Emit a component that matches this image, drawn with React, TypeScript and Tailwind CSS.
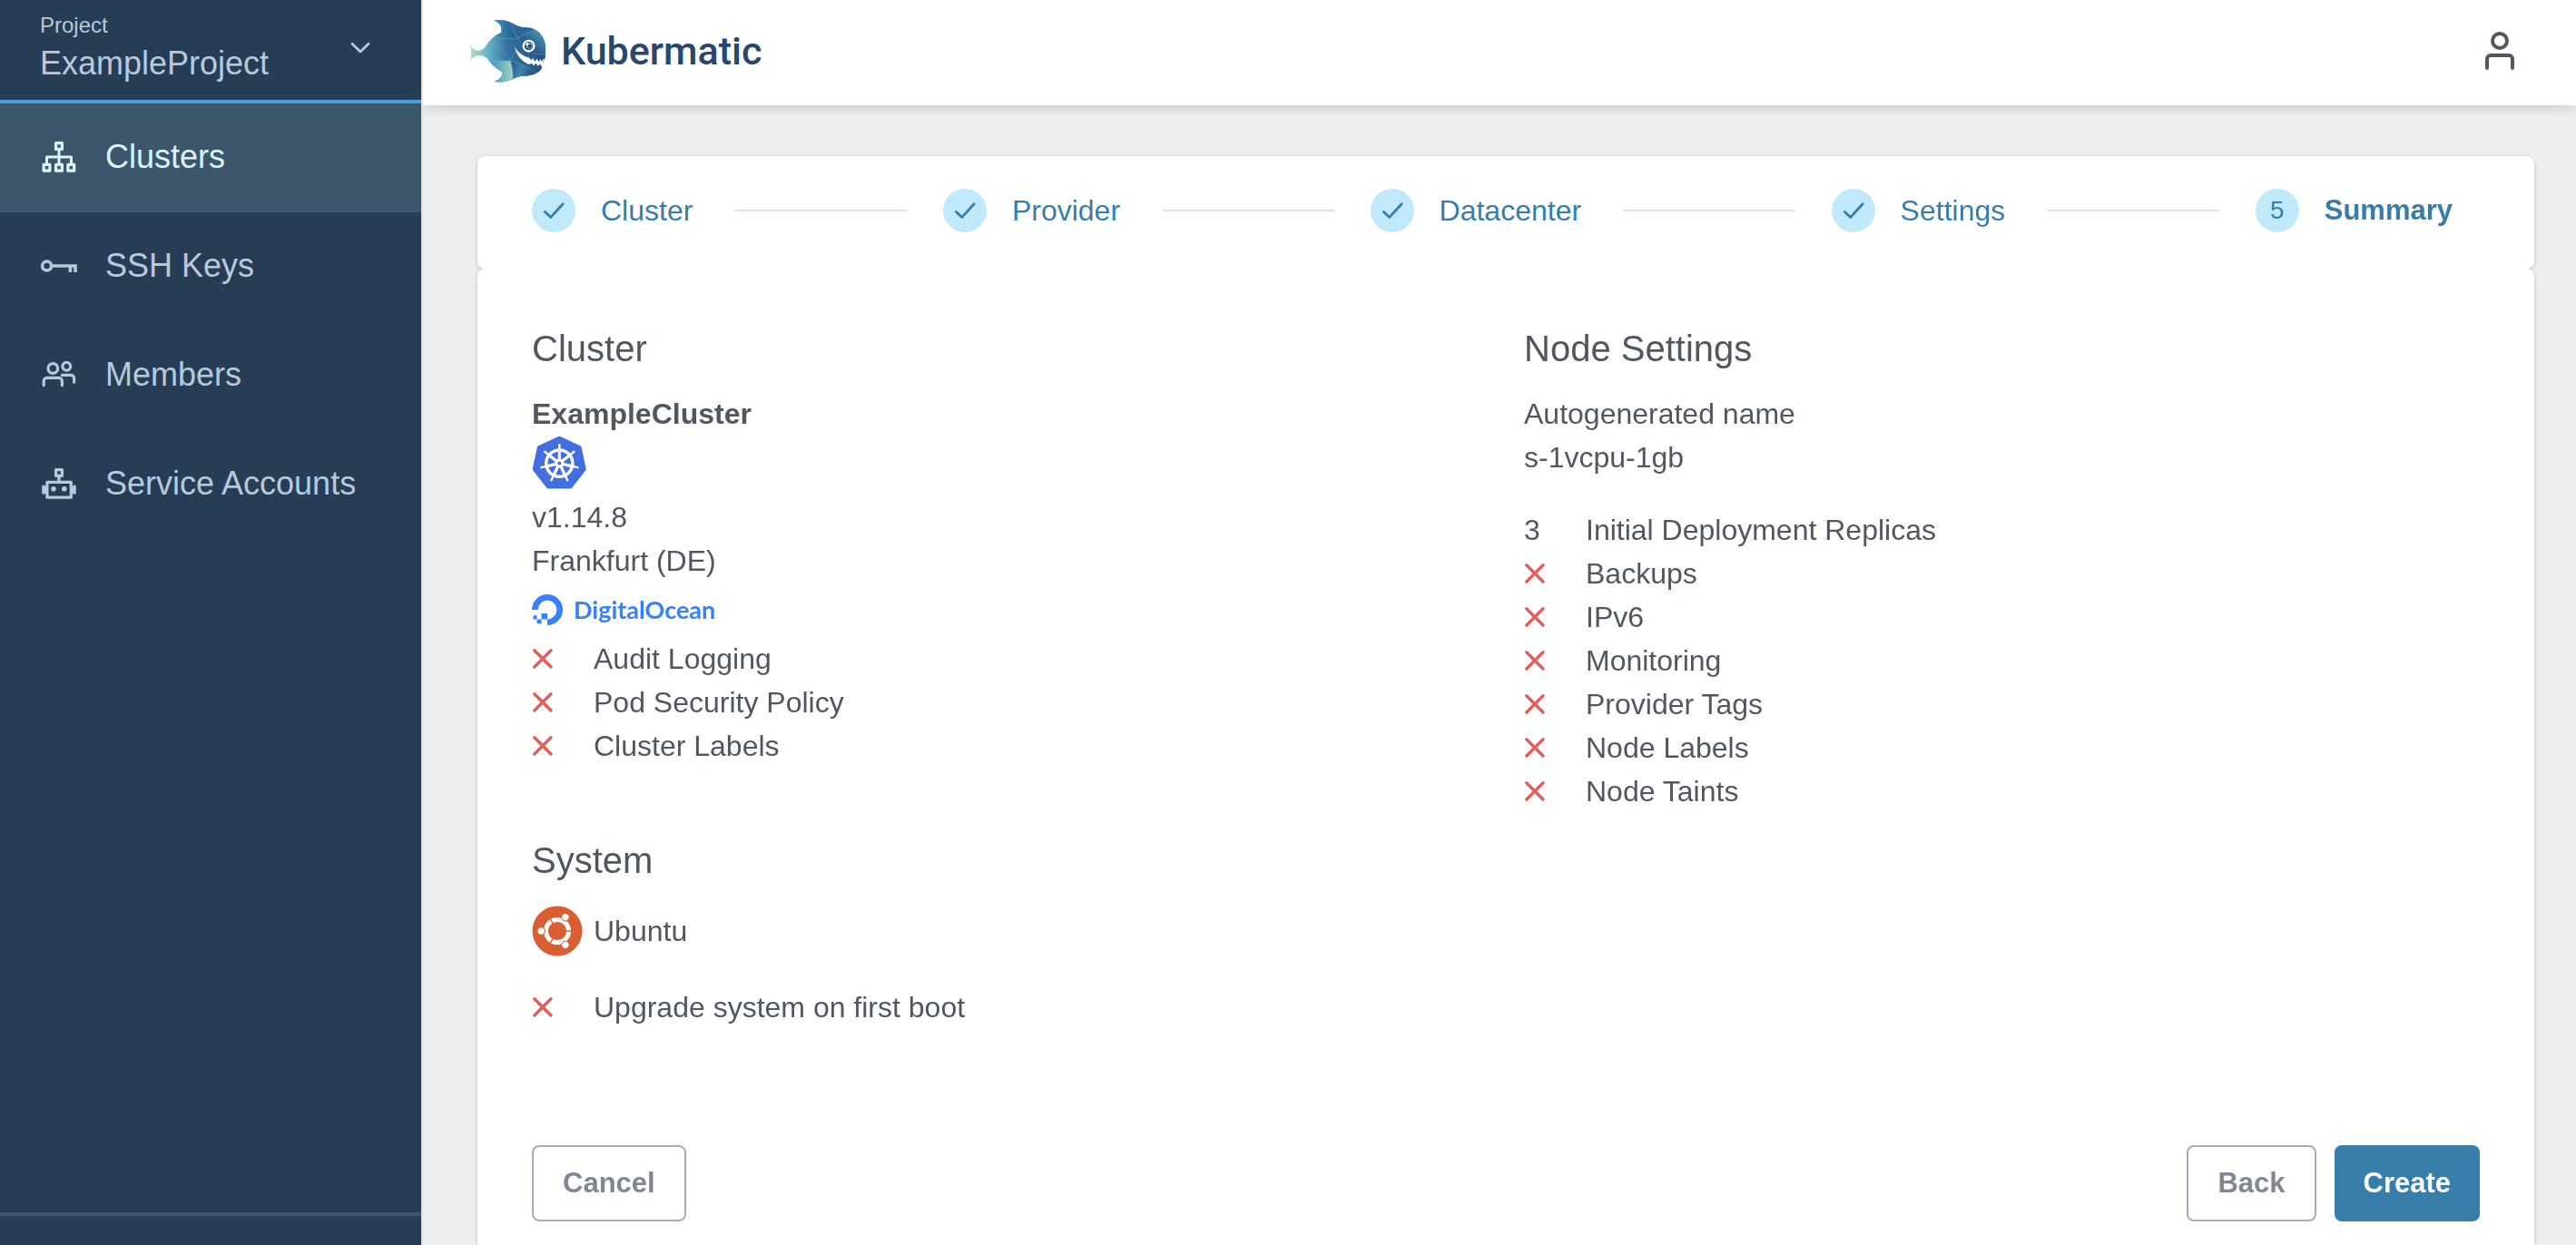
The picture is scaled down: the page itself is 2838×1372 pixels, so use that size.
import React from "react";

type IconProps = { className?: string };

const stroke = {
  fill: "none",
  stroke: "currentColor",
  strokeWidth: 3.2,
  strokeLinecap: "round" as const,
  strokeLinejoin: "round" as const,
};

function ClustersIcon() {
  return (
    <svg viewBox="0 0 40 40" className="size-10 shrink-0" aria-hidden="true" {...stroke}>
      <rect x="17.6" y="4.6" width="6.8" height="6.8" />
      <rect x="4.1" y="28.4" width="6.8" height="6.8" />
      <rect x="17.6" y="28.4" width="6.8" height="6.8" />
      <rect x="30.9" y="28.4" width="6.8" height="6.8" />
      <path d="M21 12v16M7.5 28v-8h27v8" strokeWidth="3" />
    </svg>
  );
}

function KeyIcon() {
  return (
    <svg viewBox="0 0 40 40" className="size-10 shrink-0 overflow-visible" aria-hidden="true" {...stroke} strokeLinecap="butt" strokeLinejoin="miter" strokeWidth="3.5">
      <circle cx="7.6" cy="20" r="5" />
      <path d="M13 20h26V27M33.4 20V27" />
    </svg>
  );
}

function MembersIcon() {
  return (
    <svg viewBox="0 0 40 40" className="size-10 shrink-0" aria-hidden="true" {...stroke}>
      <circle cx="14.3" cy="13" r="5.3" />
      <circle cx="29.3" cy="10.8" r="4.4" />
      <path d="M4.2 31.6V27a3.6 3.6 0 0 1 3.6-3.6h13a3.6 3.6 0 0 1 3.6 3.6v4.6" />
      <path d="M24.4 20.4h9.8a3.4 3.4 0 0 1 3.4 3.4v4.4" />
    </svg>
  );
}

function RobotIcon() {
  return (
    <svg viewBox="0 0 40 40" className="size-10 shrink-0" aria-hidden="true" {...stroke}>
      <rect x="17.6" y="4.6" width="6.8" height="6.8" />
      <path d="M21 12v5" />
      <rect x="7.9" y="18.3" width="26.4" height="16.8" />
      <path d="M4 23.4v6.6M38 23.4v6.6" strokeWidth="3.6" />
      <path d="M6 23.4v6.6M36 23.4v6.6" strokeWidth="2" />
      <circle cx="15" cy="25.8" r="2.8" fill="currentColor" stroke="none" />
      <circle cx="26.8" cy="25.8" r="2.8" fill="currentColor" stroke="none" />
    </svg>
  );
}

function ChevronIcon({ className }: IconProps) {
  return (
    <svg viewBox="0 0 22 14" className={className} aria-hidden="true" {...stroke} strokeWidth="2.8">
      <path d="M2 2.2l9 8.8 9-8.8" />
    </svg>
  );
}

function UserIcon() {
  return (
    <svg viewBox="0 0 32 42" className="h-[42px] w-8" aria-hidden="true" {...stroke} strokeWidth="4">
      <circle cx="16" cy="10" r="8" />
      <path d="M2 40V30a4 4 0 0 1 4-4h20a4 4 0 0 1 4 4v10" />
    </svg>
  );
}

function CheckIcon() {
  return (
    <svg viewBox="0 0 48 48" className="size-12" aria-hidden="true" {...stroke} strokeWidth="2.8">
      <path d="M14.4 25.4l6.4 6 13.4-14.6" />
    </svg>
  );
}

function CrossIcon() {
  return (
    <svg viewBox="0 0 24 24" className="size-6 text-[#df5f5a]" aria-label="disabled" role="img" {...stroke} strokeWidth="3.4">
      <path d="M2.8 2.8l18.2 18.2M21 2.8L2.8 21" />
    </svg>
  );
}

function FishLogo() {
  return (
    <svg viewBox="52 64 254 210" className="h-[70px] w-[85px]" aria-hidden="true">
      <defs>
        <linearGradient id="body" x1="0" x2="1">
          <stop offset="0" stopColor="#b7dccd" />
          <stop offset="0.25" stopColor="#62b3c4" />
          <stop offset="0.5" stopColor="#34719f" />
          <stop offset="1" stopColor="#24507f" />
        </linearGradient>
        <linearGradient id="fin" x1="0" x2="1">
          <stop offset="0" stopColor="#3f95b3" />
          <stop offset="1" stopColor="#24588c" />
        </linearGradient>
        <linearGradient id="belly" x1="0" x2="1">
          <stop offset="0" stopColor="#3b9bb9" />
          <stop offset="1" stopColor="#a6d3c8" />
        </linearGradient>
        <linearGradient id="brow" x1="0" y1="1" x2="1" y2="0">
          <stop offset="0.4" stopColor="#285a8e" />
          <stop offset="1" stopColor="#4fa9c1" />
        </linearGradient>
        <linearGradient id="jaw" x1="0" x2="1" y2="0.3">
          <stop offset="0" stopColor="#24548a" />
          <stop offset="0.5" stopColor="#3c86ac" />
          <stop offset="1" stopColor="#23507f" />
        </linearGradient>
      </defs>
      <path
        d="M54 149Q62 166 80 168Q98 168 110 147Q124 124 158 108Q162 80 133 68Q166 64 190 76Q214 90 232 92Q256 92 272 101Q298 116 303 152V190L290 220L292 226Q284 242 262 248Q242 253 222 253Q206 255 195 263Q170 276 134 271Q160 262 161 240Q128 222 112 196Q100 183 80 184Q64 188 54 202Q62 176 54 149Z"
        fill="url(#body)"
      />
      <path d="M133 68Q166 64 190 76Q190 104 208 128Q168 132 134 120Q144 114 158 108Q162 80 133 68Z" fill="url(#fin)" />
      <path d="M190 76Q214 90 232 92Q256 92 268 99Q238 112 212 126Q196 106 190 76Z" fill="#2b6698" />
      <path d="M268 99Q298 114 303 152V182Q252 178 212 128Q238 112 268 99Z" fill="url(#brow)" />
      <path d="M128 208Q160 200 188 203Q198 230 195 263Q170 276 134 271Q160 262 161 240Q140 228 128 208Z" fill="url(#belly)" />
      <path d="M188 203Q240 216 272 244Q250 253 222 253Q206 255 195 263Q198 230 188 203Z" fill="url(#jaw)" />
      <path
        d="M118 138Q170 166 188 203Q240 214 272 244M134 120Q170 132 208 128Q238 112 268 99M190 76Q196 108 222 140M128 206Q160 198 188 203Q198 230 196 262M188 203Q196 180 204 170M262 176Q284 182 303 181"
        fill="none"
        stroke="#79b0cc"
        strokeWidth="1.4"
      />
      <path d="M201 155Q218 186 250 192L256 200L262 193L268 204L276 195L280 206L288 196L290 205L299 192L292 219L284 213L279 219L272 210L264 218L258 210L248 214Q210 198 201 155Z" fill="#fff" />
      <circle cx="248" cy="153" r="21" fill="#fff" />
      <circle cx="248" cy="153" r="14" fill="#24507f" />
      <circle cx="250" cy="152" r="10" fill="#7fa3bd" />
      <circle cx="251" cy="153" r="6" fill="#1d3f68" />
      <circle cx="243" cy="147" r="5" fill="#fff" />
    </svg>
  );
}

const spokes = [0, 1, 2, 3, 4, 5, 6].map((i) => (i * 360) / 7);

function KubernetesLogo() {
  return (
    <svg viewBox="0 0 60 59" className="h-[59px] w-[60px]" role="img" aria-label="Kubernetes">
      <path
        d="M30.3 3.2L52.2 13.6 57.2 37 42.2 56H18.2L3.2 37 8.2 13.6Z"
        fill="#426ede"
        stroke="#426ede"
        strokeWidth="5"
        strokeLinejoin="round"
      />
      <g fill="none" stroke="#fff" strokeLinecap="round">
        <circle cx="30.3" cy="30.6" r="14.6" strokeWidth="3.4" />
        {spokes.map((a) => (
          <g key={a} transform={`rotate(${a} 30.3 30.6)`}>
            <path d="M30.3 26V10" strokeWidth="2.4" />
            <path d="M30.3 26V18" strokeWidth="3.2" />
          </g>
        ))}
      </g>
      <circle cx="30.3" cy="30.6" r="5" fill="#fff" />
      <circle cx="30.3" cy="30.6" r="2" fill="#426ede" />
    </svg>
  );
}

function DigitalOceanMark() {
  return (
    <svg viewBox="0 0 34 34" className="size-[34px]" aria-hidden="true">
      <path d="M3.3 17A13.7 13.7 0 1 1 17 30.7" fill="none" stroke="#3781ff" strokeWidth="6.6" />
      <path d="M10.5 21H17v6.4h-6.5zM5.5 27.4h5v4.8h-5zM1.4 23.2h4.1v4.2H1.4z" fill="#3781ff" />
    </svg>
  );
}

function UbuntuLogo() {
  return (
    <svg viewBox="0 0 56 56" className="size-14" aria-hidden="true">
      <circle cx="28" cy="28" r="27.5" fill="#d95e32" />
      <circle cx="28" cy="28" r="12.6" fill="none" stroke="#fff" strokeWidth="5" />
      {[0, 120, 240].map((a) => (
        <g key={a} transform={`rotate(${a} 28 28)`}>
          <path d="M36 28h9" stroke="#d95e32" strokeWidth="1.4" />
          <circle cx="10.2" cy="28" r="4.8" fill="#d95e32" />
          <circle cx="10.2" cy="28" r="3.7" fill="#fff" />
        </g>
      ))}
    </svg>
  );
}

const navItems = [
  { label: "Clusters", Icon: ClustersIcon, active: true },
  { label: "SSH Keys", Icon: KeyIcon, active: false },
  { label: "Members", Icon: MembersIcon, active: false },
  { label: "Service Accounts", Icon: RobotIcon, active: false },
];

function Sidebar() {
  return (
    <aside className="relative z-10 flex w-[466px] shrink-0 flex-col border-r-2 border-[#e0e1e2] bg-[#273d55] text-[#b9c9dc]">
      <div className="relative h-[114px] border-b-4 border-[#459fdb] pt-3 pl-11">
        <label htmlFor="project" className="block text-2xl leading-8">
          Project
        </label>
        <select id="project" className="block h-[52px] w-[370px] appearance-none bg-transparent text-4xl leading-[52px]">
          <option>ExampleProject</option>
        </select>
        <ChevronIcon className="pointer-events-none absolute top-[46px] right-14 h-[14px] w-[22px]" />
      </div>
      <nav>
        {navItems.map(({ label, Icon, active }) => (
          <a
            key={label}
            href="#"
            className={
              active
                ? "flex h-[120px] items-center gap-8 bg-[#3c576c] pb-0.5 pl-11 text-4xl text-[#dff3fd]"
                : "flex h-[120px] items-center gap-8 pb-0.5 pl-11 text-4xl"
            }
          >
            <Icon />
            <span>{label}</span>
          </a>
        ))}
      </nav>
      <div className="mt-auto h-9 border-t-4 border-[#3c576c]" />
    </aside>
  );
}

function TopBar() {
  return (
    <header className="relative flex h-[116px] items-center justify-between bg-white pr-[68px] pb-1 pl-[51px] shadow-[0_0_16px_rgba(0,0,0,0.2)]">
      <a href="#" className="flex items-center gap-4 font-['Roboto',sans-serif] text-[43px] font-medium text-[#29476e]">
        <FishLogo />
        <span>Kubermatic</span>
      </a>
      <button type="button" aria-label="Account" className="text-[#50585e]">
        <UserIcon />
      </button>
    </header>
  );
}

const steps = ["Cluster", "Provider", "Datacenter", "Settings", "Summary"];

function Stepper() {
  return (
    <ol className="flex items-center rounded-lg bg-white pt-9 pr-[90px] pb-10 pl-[60px] leading-[48px] text-[#377dab]">
      {steps.map((label, i) => {
        const last = i === steps.length - 1;
        return (
          <React.Fragment key={label}>
            <li className="flex items-center gap-7">
              <span className="flex size-12 items-center justify-center rounded-full bg-[#c0eafb] text-[28px]">
                {last ? i + 1 : <CheckIcon />}
              </span>
              <span className={last ? "text-[31px] font-bold" : ""}>{label}</span>
            </li>
            {!last && <li aria-hidden="true" className="mr-10 ml-[46px] h-0.5 flex-1 bg-[#e2e2e3]" />}
          </React.Fragment>
        );
      })}
    </ol>
  );
}

function Flag({ label, value }: { label: string; value?: string }) {
  return (
    <li className="flex items-center">
      <span className="flex w-[68px]">{value ?? <CrossIcon />}</span>
      <span>{label}</span>
    </li>
  );
}

function Heading({ children }: { children: React.ReactNode }) {
  return <h2 className="mb-6 text-[40px] leading-[48px]">{children}</h2>;
}

const outlineButton = "h-[84px] rounded-lg border-2 border-[#a5adba] px-8 text-[31px] font-bold text-[#7f8891]";

export default function App() {
  return (
    <div className="flex min-h-screen bg-[#edeef0] font-['Liberation_Sans',Arial,sans-serif] text-[32px] text-[#50585e]">
      <Sidebar />
      <div className="flex min-w-0 flex-1 flex-col">
        <TopBar />
        <main className="flex flex-1 flex-col pt-14 pr-[46px] pl-[60px] drop-shadow-[0_1px_2px_rgba(0,0,0,0.2)]">
          <Stepper />
          <section className="flex flex-1 flex-col rounded-t-lg bg-white px-[60px] pt-16 pb-[26px]">
            <div className="grid grid-cols-2 gap-10 leading-[48px]">
              <div>
                <Heading>Cluster</Heading>
                <p className="font-bold">ExampleCluster</p>
                <div className="mb-[7px]">
                  <KubernetesLogo />
                </div>
                <p>v1.14.8</p>
                <p>Frankfurt (DE)</p>
                <p className="flex h-[60px] items-center gap-3 font-['Lato',sans-serif] text-[27px] font-bold text-[#3781ff]">
                  <DigitalOceanMark />
                  DigitalOcean
                </p>
                <ul className="mb-[78px]">
                  <Flag label="Audit Logging" />
                  <Flag label="Pod Security Policy" />
                  <Flag label="Cluster Labels" />
                </ul>
                <Heading>System</Heading>
                <p className="mb-[30px] flex h-[60px] items-center gap-3">
                  <UbuntuLogo />
                  Ubuntu
                </p>
                <ul>
                  <Flag label="Upgrade system on first boot" />
                </ul>
              </div>
              <div>
                <Heading>Node Settings</Heading>
                <p>Autogenerated name</p>
                <p className="mb-8">s-1vcpu-1gb</p>
                <ul>
                  <Flag label="Initial Deployment Replicas" value="3" />
                  <Flag label="Backups" />
                  <Flag label="IPv6" />
                  <Flag label="Monitoring" />
                  <Flag label="Provider Tags" />
                  <Flag label="Node Labels" />
                  <Flag label="Node Taints" />
                </ul>
              </div>
            </div>
            <div className="mt-auto flex justify-between pt-8">
              <button type="button" className={outlineButton}>
                Cancel
              </button>
              <div className="flex gap-5">
                <button type="button" className={outlineButton}>
                  Back
                </button>
                <button type="button" className="h-[84px] rounded-lg bg-[#387eab] px-8 text-[31px] font-bold text-white">
                  Create
                </button>
              </div>
            </div>
          </section>
        </main>
      </div>
    </div>
  );
}
